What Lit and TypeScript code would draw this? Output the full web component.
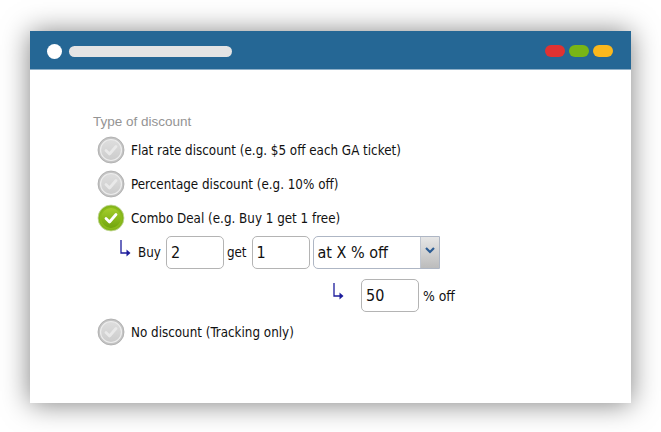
import { LitElement, html, css, svg } from "lit";
import { customElement } from "lit/decorators.js";

const radio = (on: boolean) => html`<svg class="radio" width="28" height="28" viewBox="0 0 28 28">
  <defs>
    <linearGradient id="g${on ? 1 : 0}" x1="0" y1="0" x2="0" y2="1">
      <stop offset="0" stop-color="${on ? "#a6cf2c" : "#dedede"}"/>
      <stop offset="1" stop-color="${on ? "#6fa30d" : "#cccccc"}"/>
    </linearGradient>
  </defs>
  <circle cx="14" cy="14" r="13" fill="${on ? "#83b51a" : "#c4c4c4"}" stroke="${on ? "#c6d8a0" : "#aaaaaa"}" stroke-width="0.8"/>
  <circle cx="14" cy="14" r="10.5" fill="url(#g${on ? 1 : 0})" stroke="${on ? "#8cbb1c" : "#ececec"}" stroke-width="1.2"/>
  <path d="M9 14.5 L12.5 18 L19 10.5" fill="none" stroke="${on ? "#ffffff" : "#e9e9e9"}" stroke-width="2.8" stroke-linecap="round" stroke-linejoin="round"/>
</svg>`;

const arrow = svg`<path d="M2 1 V14 H8" fill="none" stroke="#1c1c9c" stroke-width="1.3"/><path d="M7.5 10.5 L11.5 14 L7.5 17.5 Z" fill="#1c1c9c"/>`;

@customElement("app-root")
export class AppRoot extends LitElement {
  static styles = css`
    :host {
      display: block;
      width: 661px;
      height: 432px;
      background: #fff;
      overflow: hidden;
      padding: 31px 30px 29px;
      box-sizing: border-box;
      font-family: "DejaVu Sans", sans-serif;
      font-stretch: condensed;
      font-size: 13.3px;
      color: #111;
    }
    .window {
      height: 372px;
      background: #fff;
      box-shadow: 0 1px 26px rgba(0, 0, 0, 0.5);
      display: flex;
      flex-direction: column;
    }
    .bar {
      height: 39px;
      background: #256795;
      border-bottom: 1px solid #8fb0c8;
      box-sizing: border-box;
      display: flex;
      align-items: center;
      padding: 2px 18px 0 17px;
      gap: 7px;
    }
    .dot {
      width: 15px;
      height: 15px;
      border-radius: 50%;
      background: #fff;
    }
    .url {
      width: 163px;
      height: 11px;
      border-radius: 6px;
      background: #e4e4e4;
    }
    .lights {
      margin-left: auto;
      display: flex;
      gap: 4px;
    }
    .lights span {
      width: 20px;
      height: 12px;
      border-radius: 6px;
    }
    .red { background: #e03232; }
    .green { background: #78b516; }
    .yellow { background: #fbb81d; }
    .body {
      padding: 44px 0 0 63px;
      display: flex;
      flex-direction: column;
    }
    .legend {
      font-family: "Liberation Sans", sans-serif;
      font-stretch: normal;
      font-size: 13.5px;
      color: #949494;
      height: 15px;
      line-height: 15px;
      margin: 0 0 7px 0;
    }
    .opt {
      display: flex;
      align-items: center;
      gap: 6px;
      height: 28px;
      margin-left: 4px;
      margin-bottom: 6px;
    }
    .row {
      display: flex;
      align-items: center;
      height: 33px;
    }
    .row.first {
      padding-left: 26px;
      margin-top: -2px;
      margin-bottom: 10px;
    }
    .row.second {
      padding-left: 239px;
      margin-bottom: 6px;
    }
    .arrow {
      width: 14px;
      height: 18px;
      margin-top: -9px;
    }
    .buy { margin: 0 5px 0 5px; }
    .get { margin: 0 5px 0 3px; }
    .pct { margin-left: 4px; font-size: 13.8px; }
    .input {
      width: 58px;
      height: 33px;
      box-sizing: border-box;
      border: 1px solid #b4b4b4;
      border-radius: 5px;
      font-size: 16px;
      display: flex;
      align-items: center;
      padding-left: 4px;
      background: #fff;
    }
    .input.wide { margin-left: 15px; }
    .select {
      width: 127px;
      height: 33px;
      box-sizing: border-box;
      border: 1px solid #aeb6c4;
      border-radius: 5px 0 0 5px;
      display: flex;
      font-size: 16px;
      background: #fff;
      margin-left: 3px;
    }
    .select .val {
      flex: 1;
      display: flex;
      align-items: center;
      padding-left: 4px;
    }
    .select .btn {
      width: 19px;
      background: linear-gradient(#e6e6e6, #bcbcbc);
      border-left: 1px solid #c0c6d0;
      display: flex;
      justify-content: center;
      padding-top: 10px;
      box-sizing: border-box;
    }
  `;

  render() {
    return html`<div class="window">
      <div class="bar">
        <div class="dot"></div>
        <div class="url"></div>
        <div class="lights"><span class="red"></span><span class="green"></span><span class="yellow"></span></div>
      </div>
      <div class="body">
        <div class="legend">Type of discount</div>
        <div class="opt">${radio(false)}<span>Flat rate discount (e.g. $5 off each GA ticket)</span></div>
        <div class="opt">${radio(false)}<span>Percentage discount (e.g. 10% off)</span></div>
        <div class="opt">${radio(true)}<span>Combo Deal (e.g. Buy 1 get 1 free)</span></div>
        <div class="row first">
          <svg class="arrow" viewBox="0 0 14 18">${arrow}</svg>
          <span class="buy">Buy</span>
          <div class="input">2</div>
          <span class="get">get</span>
          <div class="input">1</div>
          <div class="select">
            <div class="val">at X % off</div>
            <div class="btn"><svg width="10" height="7" viewBox="0 0 10 7"><path d="M1 1 L5 5 L9 1" fill="none" stroke="#2b5c94" stroke-width="2.2"/></svg></div>
          </div>
        </div>
        <div class="row second">
          <svg class="arrow" viewBox="0 0 14 18">${arrow}</svg>
          <div class="input wide">50</div>
          <span class="pct">% off</span>
        </div>
        <div class="opt">${radio(false)}<span>No discount (Tracking only)</span></div>
      </div>
    </div>`;
  }
}
